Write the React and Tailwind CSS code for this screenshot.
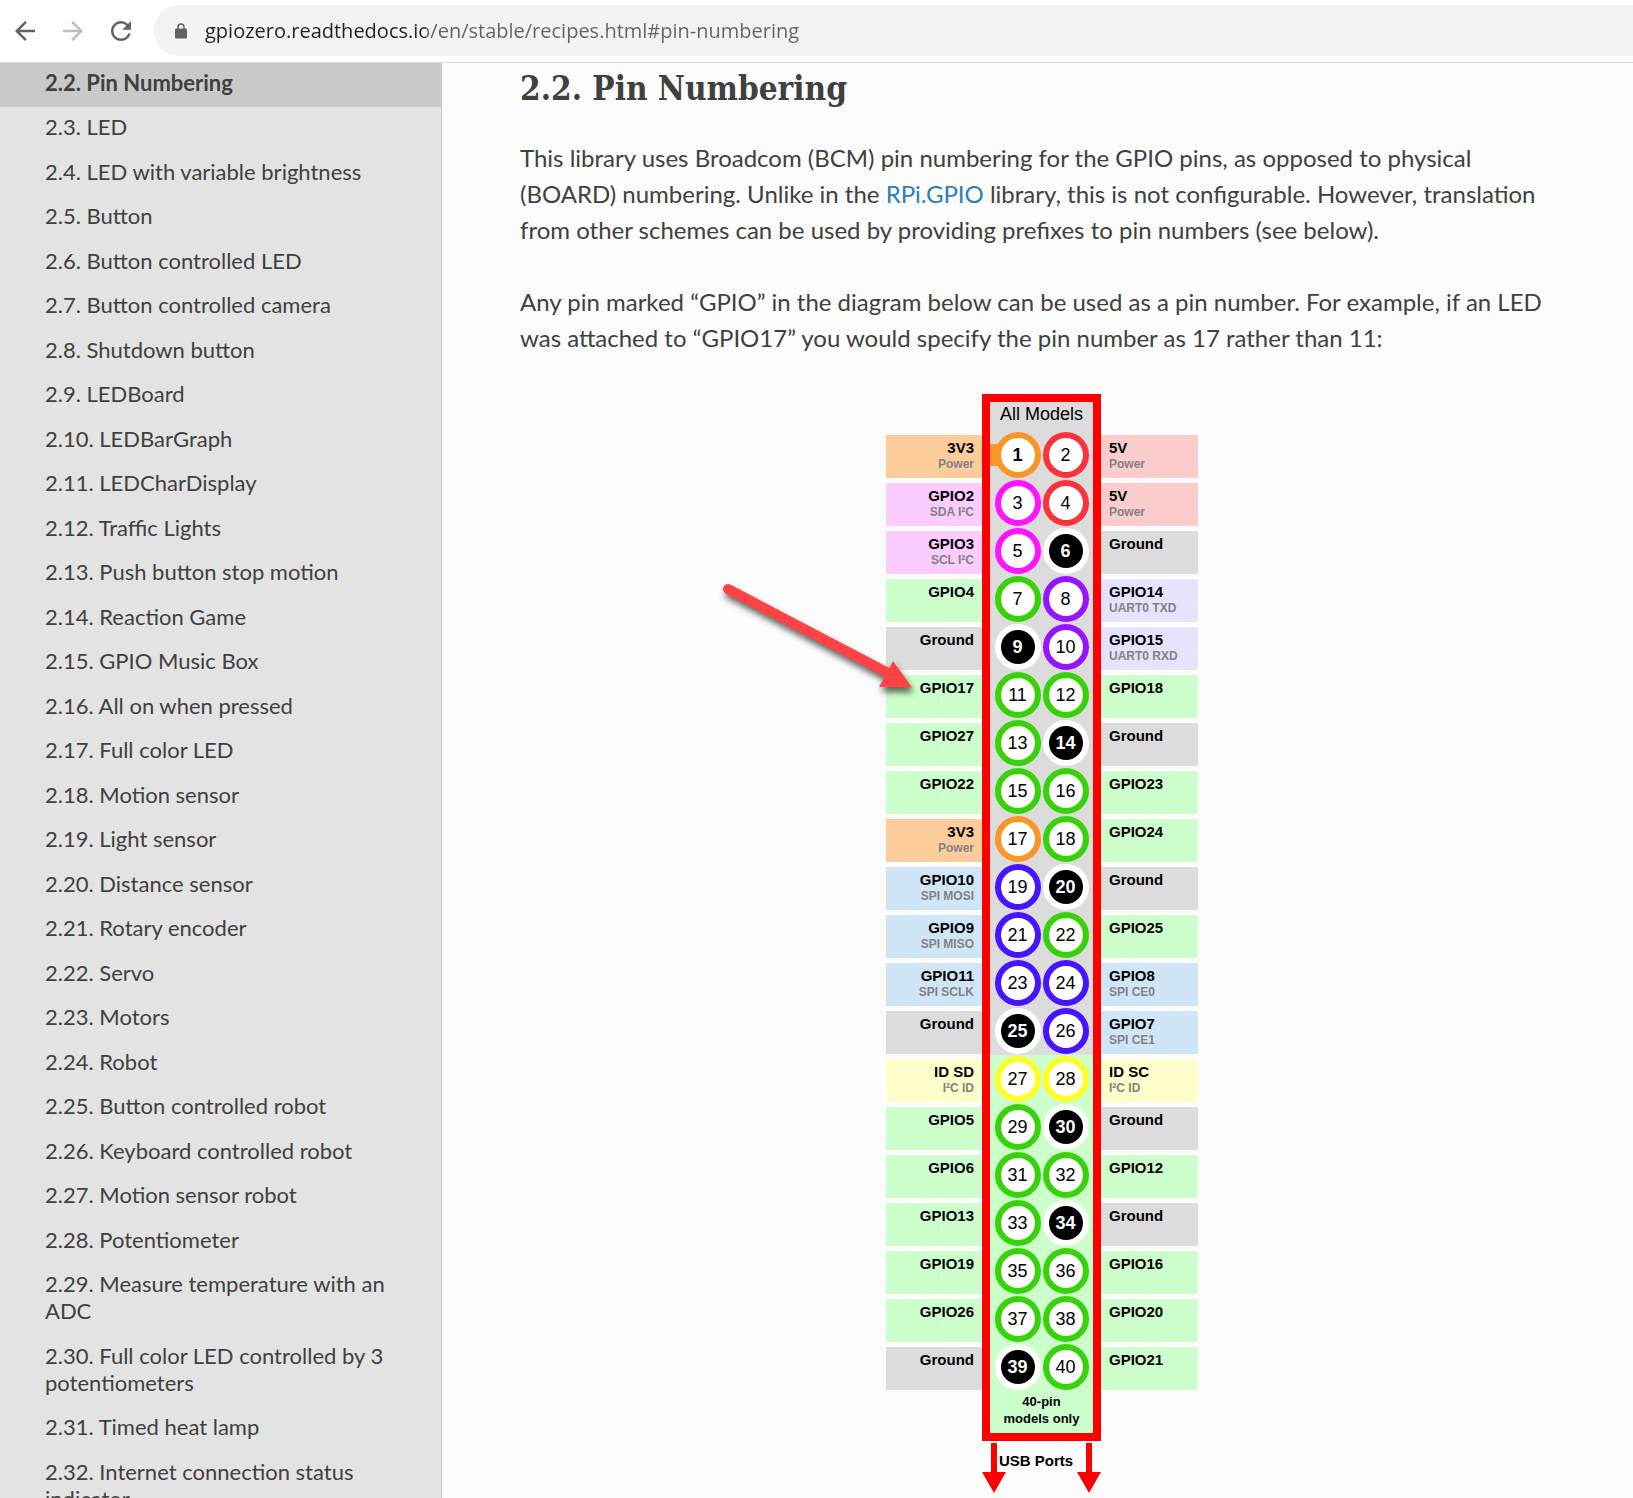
import { MdArrowBack, MdArrowForward, MdRefresh } from "react-icons/md";

const sections = [
  "2.2. Pin Numbering",
  "2.3. LED",
  "2.4. LED with variable brightness",
  "2.5. Button",
  "2.6. Button controlled LED",
  "2.7. Button controlled camera",
  "2.8. Shutdown button",
  "2.9. LEDBoard",
  "2.10. LEDBarGraph",
  "2.11. LEDCharDisplay",
  "2.12. Traffic Lights",
  "2.13. Push button stop motion",
  "2.14. Reaction Game",
  "2.15. GPIO Music Box",
  "2.16. All on when pressed",
  "2.17. Full color LED",
  "2.18. Motion sensor",
  "2.19. Light sensor",
  "2.20. Distance sensor",
  "2.21. Rotary encoder",
  "2.22. Servo",
  "2.23. Motors",
  "2.24. Robot",
  "2.25. Button controlled robot",
  "2.26. Keyboard controlled robot",
  "2.27. Motion sensor robot",
  "2.28. Potentiometer",
  "2.29. Measure temperature with an ADC",
  "2.30. Full color LED controlled by 3 potentiometers",
  "2.31. Timed heat lamp",
  "2.32. Internet connection status indicator",
];

const kinds = {
  power3: { label: "bg-[#facd9b]", ring: "border-[#fa9628] bg-white" },
  power5: { label: "bg-[#facccc]", ring: "border-[#fa323c] bg-white" },
  i2c: { label: "bg-[#fbccff]", ring: "border-[#ff14ff] bg-white" },
  gpio: { label: "bg-[#ccffcc]", ring: "border-[#37d20a] bg-white" },
  uart: { label: "bg-[#e6e3ff]", ring: "border-[#9614ff] bg-white" },
  spi: { label: "bg-[#d0e5f5]", ring: "border-[#4614ff] bg-white" },
  id: { label: "bg-[#ffffcc]", ring: "border-[#ffff28] bg-white" },
  ground: { label: "bg-[#dcdcdc]", ring: "border-white bg-black font-bold text-white" },
};

const leftPins = [
  ["3V3", "Power", "power3"],
  ["GPIO2", "SDA I²C", "i2c"],
  ["GPIO3", "SCL I²C", "i2c"],
  ["GPIO4", "", "gpio"],
  ["Ground", "", "ground"],
  ["GPIO17", "", "gpio"],
  ["GPIO27", "", "gpio"],
  ["GPIO22", "", "gpio"],
  ["3V3", "Power", "power3"],
  ["GPIO10", "SPI MOSI", "spi"],
  ["GPIO9", "SPI MISO", "spi"],
  ["GPIO11", "SPI SCLK", "spi"],
  ["Ground", "", "ground"],
  ["ID SD", "I²C ID", "id"],
  ["GPIO5", "", "gpio"],
  ["GPIO6", "", "gpio"],
  ["GPIO13", "", "gpio"],
  ["GPIO19", "", "gpio"],
  ["GPIO26", "", "gpio"],
  ["Ground", "", "ground"],
];

const rightPins = [
  ["5V", "Power", "power5"],
  ["5V", "Power", "power5"],
  ["Ground", "", "ground"],
  ["GPIO14", "UART0 TXD", "uart"],
  ["GPIO15", "UART0 RXD", "uart"],
  ["GPIO18", "", "gpio"],
  ["Ground", "", "ground"],
  ["GPIO23", "", "gpio"],
  ["GPIO24", "", "gpio"],
  ["Ground", "", "ground"],
  ["GPIO25", "", "gpio"],
  ["GPIO8", "SPI CE0", "spi"],
  ["GPIO7", "SPI CE1", "spi"],
  ["ID SC", "I²C ID", "id"],
  ["Ground", "", "ground"],
  ["GPIO12", "", "gpio"],
  ["Ground", "", "ground"],
  ["GPIO16", "", "gpio"],
  ["GPIO20", "", "gpio"],
  ["GPIO21", "", "gpio"],
];

function LockIcon() {
  return (
    <svg width="12" height="16" viewBox="0 0 12 16" fill="none" className="shrink-0" aria-hidden="true">
      <rect y="5.500" width="12" height="10" rx="1.300" fill="currentColor" />
      <path d="M3 6V4a3 3 0 0 1 6 0v2" stroke="currentColor" strokeWidth="1.500" />
    </svg>
  );
}

function BrowserBar() {
  return (
    <header className="flex h-[63px] shrink-0 items-center border-b border-[#d9dbde] bg-white pb-px pl-[10px] text-[#5f6368]">
      <button aria-label="Back" className="mr-[18px]"><MdArrowBack size={30} /></button>
      <button aria-label="Forward" className="mr-[18px] text-[#bcbec1]"><MdArrowForward size={30} /></button>
      <button aria-label="Reload"><MdRefresh size={30} /></button>
      <div className="ml-[18px] flex h-[51px] flex-1 items-center rounded-l-full bg-[#f1f3f4] pl-[21px]">
        <LockIcon />
        <input
          aria-label="Address"
          readOnly
          value="gpiozero.readthedocs.io/en/stable/recipes.html#pin-numbering"
          className="ml-[18px] h-9 min-w-0 flex-1 bg-linear-to-r from-[#202124] from-[221px] to-[#5f6368] to-[221px] bg-clip-text font-['Open_Sans',sans-serif] text-[20px] text-transparent outline-none"
        />
      </div>
    </header>
  );
}

function Sidebar() {
  return (
    <nav aria-label="Sections" className="w-[442px] shrink-0 overflow-hidden bg-[#e3e3e3]">
      <ul>
        {sections.map((name, i) => (
          <li key={name} className="group">
            <a
              href={"#section-" + (i + 2)}
              aria-current={i === 0 ? "page" : undefined}
              className="block border-r border-[#c9c9c9] px-[45px] pt-[6px] pb-[11px] text-[22px] leading-[27px] text-[#404040] group-even:pb-3 aria-[current]:bg-[#c9c9c9] aria-[current]:font-bold"
            >
              {name}
            </a>
          </li>
        ))}
      </ul>
    </nav>
  );
}

function PinLabels({ pins, className }) {
  return (
    <ul className={"mt-[41px] flex flex-col gap-[5px] font-bold " + className}>
      {pins.map(([name, detail, kind], i) => (
        <li key={i} className={"h-[43px] px-2 pt-1 " + kinds[kind].label}>
          <p className="text-[15px] leading-[17px] text-black">{name}</p>
          <p className="text-[12px] leading-[17px] text-[#828282]">{detail}</p>
        </li>
      ))}
    </ul>
  );
}

function PinPair({ row }) {
  return (
    <div className="relative flex h-12 items-center justify-center gap-[2px]">
      {row === 0 && <span className="absolute top-[13px] left-0 h-[22px] w-5 bg-[#fa9628]" />}
      {[leftPins[row], rightPins[row]].map((pin, side) => (
        <span
          key={side}
          className={
            "relative flex size-[46px] items-center justify-center rounded-full border-6 text-[18px] " +
            kinds[pin[2]].ring +
            (row === 0 && side === 0 ? " font-bold" : "")
          }
        >
          {row * 2 + side + 1}
        </span>
      ))}
    </div>
  );
}

function DownArrow() {
  return (
    <svg width="24" height="50" viewBox="0 0 24 50" fill="#ff0000" aria-hidden="true">
      <path d="M9 0h6v29h9L12 50 0 29h9z" />
    </svg>
  );
}

function PinDiagram() {
  const rows = leftPins.map((_, i) => i);
  return (
    <figure className="relative mx-auto mt-[38px] flex w-[312px] items-start font-['Liberation_Sans',Arial,sans-serif] text-black">
      <PinLabels pins={leftPins} className="w-24 text-right" />
      <div className="w-[119px]">
        <div className="border-8 border-[#ff0000] bg-[#dcdcdc]">
          <p className="h-[29px] text-center text-[18px] leading-6">All Models</p>
          {rows.slice(0, 13).map((row) => <PinPair key={row} row={row} />)}
          <div className="bg-[#ccffcc]">
            {rows.slice(13).map((row) => <PinPair key={row} row={row} />)}
            <p className="h-[42px] pt-[2px] text-center text-[13px] leading-[17px] font-bold">
              40-pin<br />models only
            </p>
          </div>
        </div>
        <div className="relative flex justify-between pt-[2px]">
          <DownArrow />
          <p className="absolute top-[11px] left-[17px] text-[15px] leading-[17px] font-bold whitespace-nowrap">USB Ports</p>
          <DownArrow />
        </div>
      </div>
      <PinLabels pins={rightPins} className="w-[97px]" />
      <svg
        className="absolute top-[180px] -left-[170px] overflow-visible"
        width="200"
        height="130"
        viewBox="0 0 200 130"
        aria-hidden="true"
      >
        <g fill="#fd4343" stroke="#fd4343" className="drop-shadow-[2px_5px_3px_rgba(0,0,0,0.6)]">
          <path d="M12 15 172 99" strokeWidth="10" strokeLinecap="round" />
          <path d="M177 87 196 113.500 163 113z" stroke="none" />
        </g>
      </svg>
    </figure>
  );
}

export default function App() {
  return (
    <div className="flex h-screen flex-col overflow-hidden bg-[#fcfcfc] font-['Lato',sans-serif] text-[#404040]">
      <BrowserBar />
      <div className="flex min-h-0 flex-1">
        <Sidebar />
        <main className="min-w-0 flex-1 overflow-hidden pr-[69px] pl-[78px]">
          <h2 className="mb-[30px] pt-[5px] font-['Roboto_Slab','DejaVu_Serif_Condensed','DejaVu_Serif',serif] text-[33px] leading-[42px] font-bold">
            2.2. Pin Numbering
          </h2>
          <p className="mb-9 text-[24px] leading-9">
            This library uses Broadcom (BCM) pin numbering for the GPIO pins, as opposed to physical
            (BOARD) numbering. Unlike in the <a href="#rpi-gpio" className="text-[#2980b9]">RPi.GPIO</a> library,
            this is not configurable. However, translation from other schemes can be used by providing prefixes to
            pin numbers (see below).
          </p>
          <p className="text-[24px] leading-9">
            Any pin marked “GPIO” in the diagram below can be used as a pin number. For example, if an LED was
            attached to “GPIO17” you would specify the pin number as 17 rather than 11:
          </p>
          <PinDiagram />
        </main>
      </div>
    </div>
  );
}
